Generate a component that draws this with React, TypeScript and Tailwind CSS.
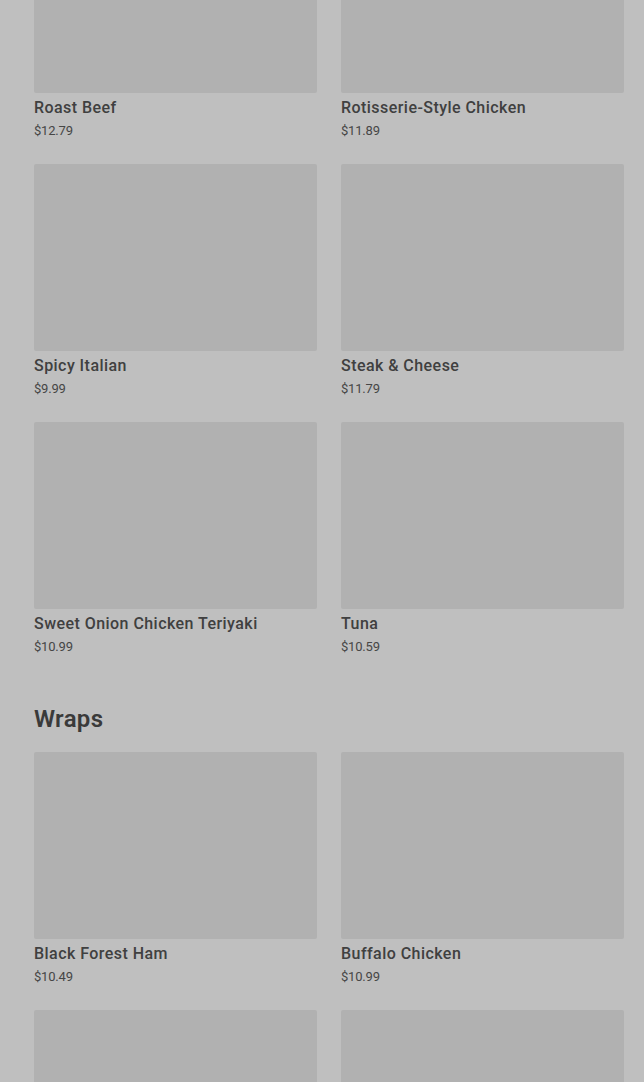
import React from 'react';

type Item = { name: string; price: string };

const sandwiches: Item[] = [
  { name: 'Roast Beef', price: '$12.79' },
  { name: 'Rotisserie-Style Chicken', price: '$11.89' },
  { name: 'Spicy Italian', price: '$9.99' },
  { name: 'Steak & Cheese', price: '$11.79' },
  { name: 'Sweet Onion Chicken Teriyaki', price: '$10.99' },
  { name: 'Tuna', price: '$10.59' },
];

const wraps: Item[] = [
  { name: 'Black Forest Ham', price: '$10.49' },
  { name: 'Buffalo Chicken', price: '$10.99' },
  { name: 'Chicken Caesar', price: '$10.99' },
  { name: 'Steak Club', price: '$11.49' },
];

const MenuCard = ({ item }: { item: Item }) => (
  <div className="flex flex-col">
    <div className="h-[187px] w-full rounded-[2px] bg-[#b1b1b1]" />
    <p className="mt-[5px] text-[16px] leading-[20px] font-medium text-[#404040] font-['Roboto',sans-serif] tracking-[0.45px]">
      {item.name}
    </p>
    <p className="mt-[4px] text-[13px] leading-[18px] text-[#464646] font-['Roboto',sans-serif] tracking-[-0.2px]">
      {item.price}
    </p>
  </div>
);

const App = () => {
  return (
    <div className="h-screen overflow-hidden bg-[#bfbfbf] pl-[34px] pr-[20px]">
      <div className="mt-[-94px] grid grid-cols-2 gap-x-[24px] gap-y-[24px]">
        {sandwiches.map((item) => (
          <MenuCard key={item.name} item={item} />
        ))}
      </div>

      <h2 className="mt-[47px] text-[24px] leading-[32px] font-semibold text-[#3a3a3a] font-['Roboto',sans-serif] tracking-[0.3px]">
        Wraps
      </h2>

      <div className="mt-[17px] grid grid-cols-2 gap-x-[24px] gap-y-[24px]">
        {wraps.map((item) => (
          <MenuCard key={item.name} item={item} />
        ))}
      </div>
    </div>
  );
};

export default App;
